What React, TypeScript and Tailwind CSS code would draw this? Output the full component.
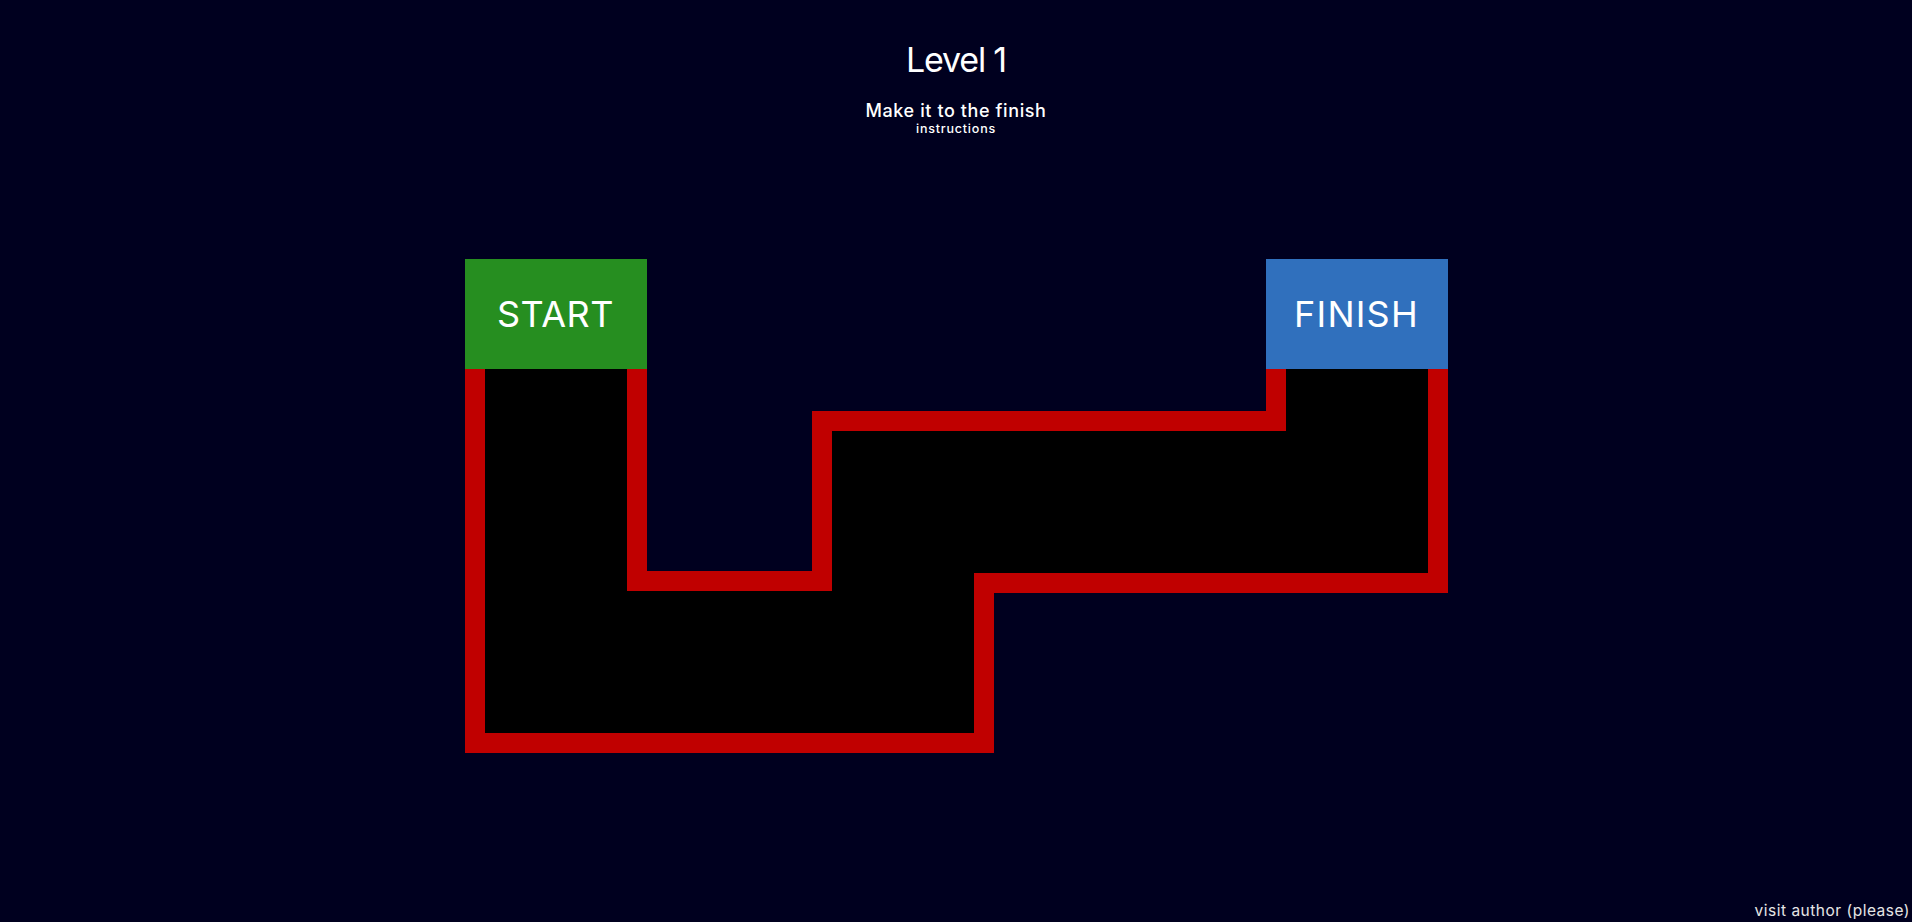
import React from 'react';

// Maze grid tracks (px): walls are 20 wide, corridors 142
const COLS = 'grid-cols-[20px_142px_20px_165px_20px_142px_20px_272px_20px_142px_20px]';
const ROWS = 'grid-rows-[110px_42px_20px_140px_2px_18px_2px_140px_20px]';

const Level: React.FC = () => {
  return (
    <div
      className="min-h-screen w-full flex flex-col items-center bg-[#00001f] text-white"
      style={{ fontFamily: 'Inter, "Open Sans", sans-serif' }}
    >
      {/* Header */}
      <header className="pt-[38px] flex flex-col items-center">
        <h1 className="text-[34px] leading-[44px] font-normal tracking-[-1.2px]">Level 1</h1>
        <p className="mt-[18px] text-[18px] leading-[22px] font-medium tracking-[0.6px]">Make it to the finish</p>
        <p className="text-[12.5px] leading-[14px] font-medium tracking-[0.8px]">instructions</p>
      </header>

      {/* Maze */}
      <div className={`mt-[123px] grid ${COLS} ${ROWS}`}>
        {/* start / finish */}
        <div className="col-[1/4] row-[1/2] bg-[#268e20] flex items-center justify-center text-[36px] leading-none tracking-[0.5px]">
          START
        </div>
        <div className="col-[9/12] row-[1/2] bg-[#3070bd] flex items-center justify-center text-[36px] leading-none tracking-[1.2px]">
          FINISH
        </div>

        {/* walls (outer shape) */}
        <div className="col-[1/4] row-[2/10] bg-[#c00000]" />
        <div className="col-[1/8] row-[5/10] bg-[#c00000]" />
        <div className="col-[5/12] row-[3/8] bg-[#c00000]" />
        <div className="col-[9/12] row-[2/8] bg-[#c00000]" />

        {/* path (interior) */}
        <div className="col-[2/3] row-[2/9] bg-black" />
        <div className="col-[2/7] row-[7/9] bg-black" />
        <div className="col-[6/11] row-[4/6] bg-black" />
        <div className="col-[6/7] row-[4/9] bg-black" />
        <div className="col-[10/11] row-[2/6] bg-black" />
      </div>

      <footer className="mt-auto self-end pr-[2px] pb-[1px] text-[15.5px] leading-[20px] tracking-[0.5px] text-[#e6e6e6]">
        visit author (please)
      </footer>
    </div>
  );
};

export default function App() {
  return <Level />;
}
